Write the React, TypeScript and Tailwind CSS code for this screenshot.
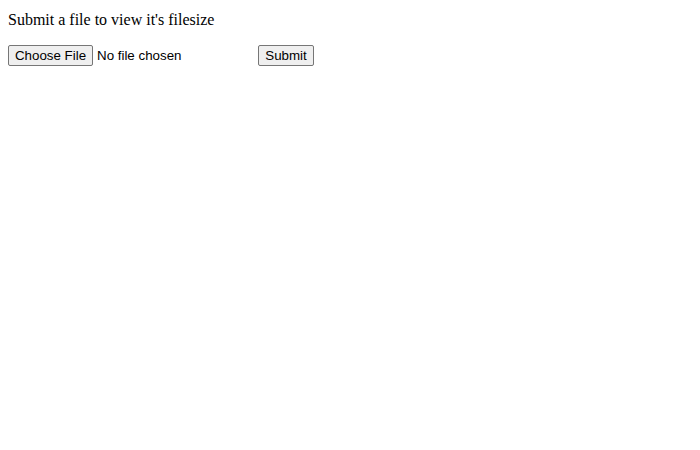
export default function App() {
  return (
    <div className="min-h-[450px] bg-white px-[8px] pt-[11px] text-black">
      <p className="text-[16px] leading-[18px]" style={{ fontFamily: '"Liberation Serif", "Times New Roman", serif' }}>
        Submit a file to view it's filesize
      </p>
      <form
        className="mt-[16px] flex items-center"
        style={{ fontFamily: '"Liberation Sans", Arial, sans-serif' }}
        onSubmit={(e) => e.preventDefault()}
      >
        <div className="flex w-[246px] items-center">
          <button
            type="button"
            className="flex h-[21px] w-[85px] items-center justify-center rounded-[2px] border border-[#767676] bg-[#efefef] text-[13.333px] leading-[15px] text-black"
          >
            Choose File
          </button>
          <span className="ml-[4px] text-[13.333px] leading-[15px]">No file chosen</span>
        </div>
        <button
          type="submit"
          className="ml-[4px] flex h-[21px] w-[56px] items-center justify-center rounded-[2px] border border-[#767676] bg-[#efefef] text-[13.333px] leading-[15px] text-black"
        >
          Submit
        </button>
      </form>
    </div>
  );
}
